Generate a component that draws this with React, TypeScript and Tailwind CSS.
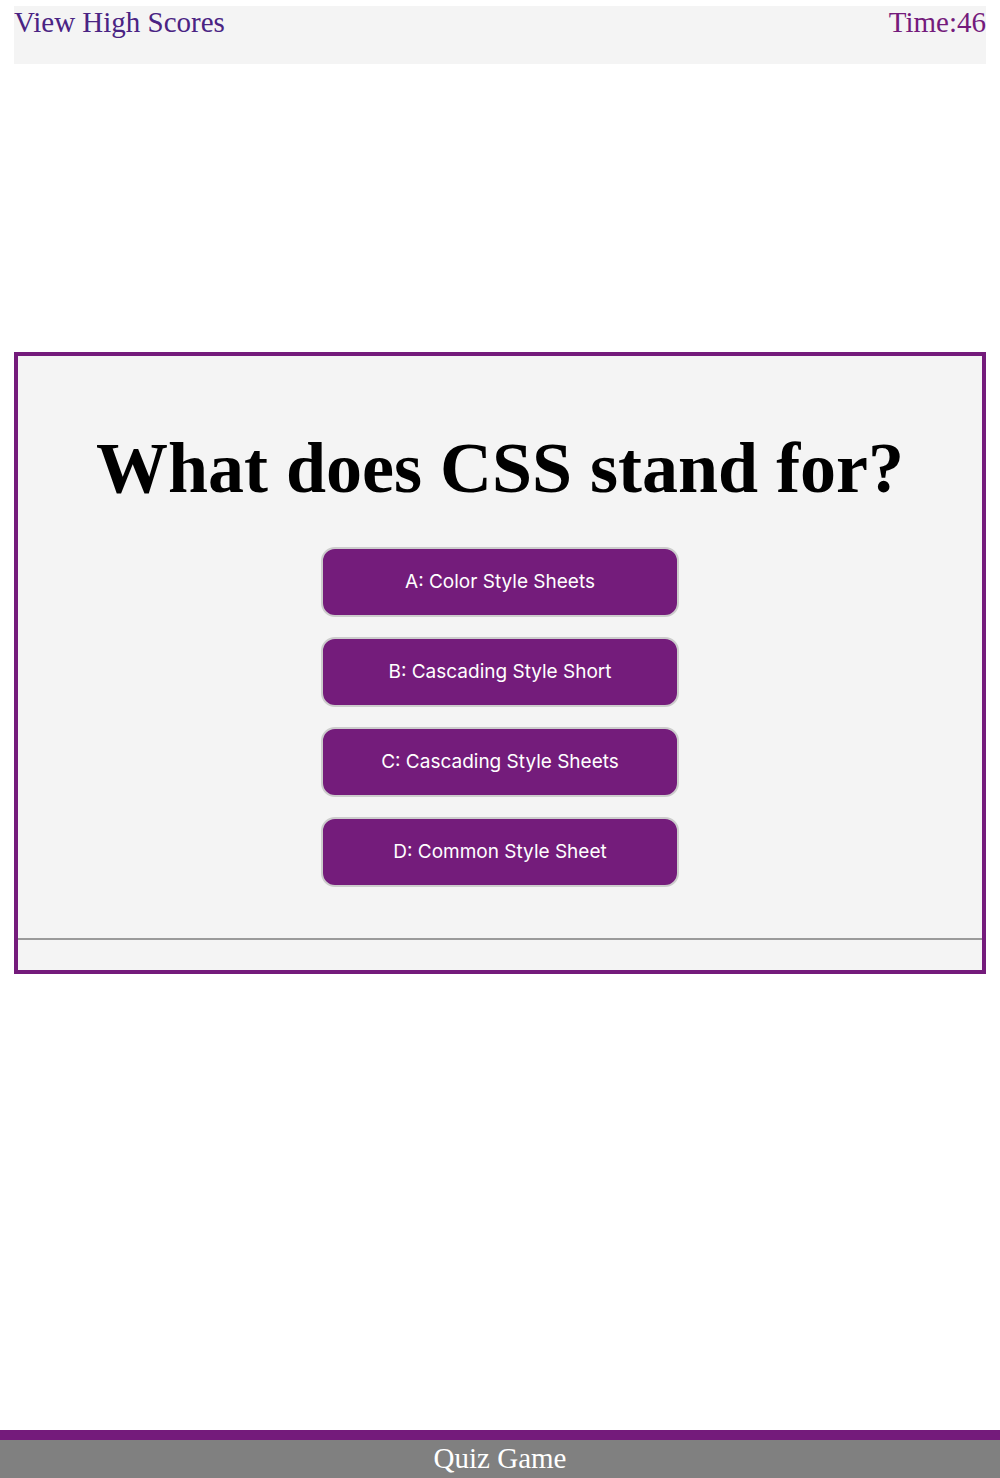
const answers = [
  "A: Color Style Sheets",
  "B: Cascading Style Short",
  "C: Cascading Style Sheets",
  "D: Common Style Sheet",
];

export default function App() {
  return (
    <div className="min-h-[1478px] flex flex-col bg-white font-['Liberation_Serif',serif]">
      {/* header */}
      <header className="mt-[6px] mx-[14px] h-[58px] bg-[#f4f4f4] flex justify-between items-start">
        <a className="text-[29px] leading-[33px] text-[#4a2383]">View High Scores</a>
        <span className="text-[29px] leading-[33px] text-[#741b7c]">Time:46</span>
      </header>

      {/* question card */}
      <main className="mt-[288px] mx-[14px] border-4 border-[#741b7b] bg-[#f4f4f4] flex flex-col">
        <h1 className="pt-[72px] text-center text-[72px] leading-[80px] font-bold text-black">
          What does CSS stand for?
        </h1>

        <div className="mt-[39px] flex flex-col items-center gap-[20px]">
          {answers.map((a) => (
            <button
              key={a}
              className="w-[358px] h-[70px] rounded-[14px] border-2 border-[#cccccc] bg-[#741c7b] text-white text-[19px] font-['Inter',sans-serif]"
            >
              {a}
            </button>
          ))}
        </div>

        <hr className="mt-[51px] border-t-2 border-[#9a9a9a]" />
        <div className="h-[30px]"></div>
      </main>

      {/* footer */}
      <footer className="mt-auto border-t-[10px] border-[#741b7b] bg-[#808080] h-[48px] text-center text-white text-[29px] leading-[36px]">
        Quiz Game
      </footer>
    </div>
  );
}
